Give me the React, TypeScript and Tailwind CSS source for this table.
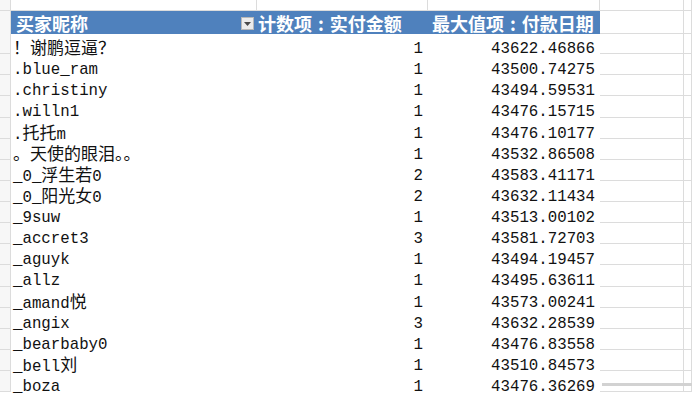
import React from 'react';

const rows: [string, number, string][] = [
  ['！谢鹏逗逼？', 1, '43622.46866'],
  ['.blue_ram', 1, '43500.74275'],
  ['.christiny', 1, '43494.59531'],
  ['.willn1', 1, '43476.15715'],
  ['.托托m', 1, '43476.10177'],
  ['。天使的眼泪。。', 1, '43532.86508'],
  ['_0_浮生若0', 2, '43583.41171'],
  ['_0_阳光女0', 2, '43632.11434'],
  ['_9suw', 1, '43513.00102'],
  ['_accret3', 3, '43581.72703'],
  ['_aguyk', 1, '43494.19457'],
  ['_allz', 1, '43495.63611'],
  ['_amand悦', 1, '43573.00241'],
  ['_angix', 3, '43632.28539'],
  ['_bearbaby0', 1, '43476.83558'],
  ['_bell刘', 1, '43510.84573'],
  ['_boza', 1, '43476.36269'],
];

const grid = 'grid grid-cols-[11px_246px_171px_172px_84px_1fr]';
const line = 'border-r border-b border-[#dcdcdc]';
const cell = "h-[21.125px] pt-[9px] text-[15.75px] leading-[15px] whitespace-nowrap text-[#111] [font-family:'Liberation_Mono','Noto_Sans_CJK_SC',monospace]";
const head = "bg-[#4f81bd] pt-[1px] text-white font-bold text-[18px] leading-[22px] whitespace-nowrap [font-family:'Noto_Sans_CJK_SC',sans-serif]";

// CJK glyphs sit a little wider than the mono latin in the sheet font
const Name = ({ text }: { text: string }) => {
  const parts = text.split(/([\u3000-\u9fff\uff00-\uffef]+)/).filter(Boolean);
  return (
    <>
      {parts.map((p, i) =>
        /[\u3000-\u9fff\uff00-\uffef]/.test(p) ? (
          <span key={i} className="text-[17px]">{p}</span>
        ) : (
          <span key={i}>{p}</span>
        )
      )}
    </>
  );
};

export default function App() {
  return (
    <div className="relative w-[692px] h-[397px] overflow-hidden bg-white">
      {/* top row */}
      <div className={`${grid} h-[11px]`}>
        <div className={`${line} bg-[#f7f7f7]`} />
        <div className={line} />
        <div className={line} />
        <div className={line} />
        <div className={line} />
        <div className={line} />
      </div>

      {/* pivot header */}
      <div className={`${grid} h-[22px]`}>
        <div className={`${line} bg-[#f7f7f7]`} />
        <div className={`${head} flex items-center justify-between pl-[5px] pr-[3px]`}>
          <span>买家昵称</span>
          <span className="flex h-[13px] w-[13px] items-center justify-center border border-[#b8b8b8] bg-[#ececec] mt-[1px]">
            <svg width="7" height="4" viewBox="0 0 7 4">
              <path d="M0 0h7L3.5 4z" fill="#4a4a4a" />
            </svg>
          </span>
        </div>
        <div className={`${head} pl-[1px]`}>
          计数项<span className="px-[6px]">:</span>实付金额
        </div>
        <div className={`${head} pl-[4px]`}>
          最大值项<span className="px-[6px]">:</span>付款日期
        </div>
        <div className={line} />
        <div className={line} />
      </div>

      {/* data rows */}
      {rows.map(([name, count, date]) => (
        <div key={name} className={grid}>
          <div className={`${line} h-[21.125px] bg-[#f7f7f7]`} />
          <div className={`${cell} pl-[2px]`}>
            <Name text={name} />
          </div>
          <div className={`${cell} pr-[5px] text-right`}>{count}</div>
          <div className={`${cell} pr-[5px] text-right`}>{date}</div>
          <div className={`${line} h-[21.125px]`} />
          <div className={`${line} h-[21.125px]`} />
        </div>
      ))}

      {/* faint bar left by the watermark */}
      <div className="absolute left-[602px] right-0 top-[383px] h-[3px] bg-[#d2d2d2]" />
    </div>
  );
}
